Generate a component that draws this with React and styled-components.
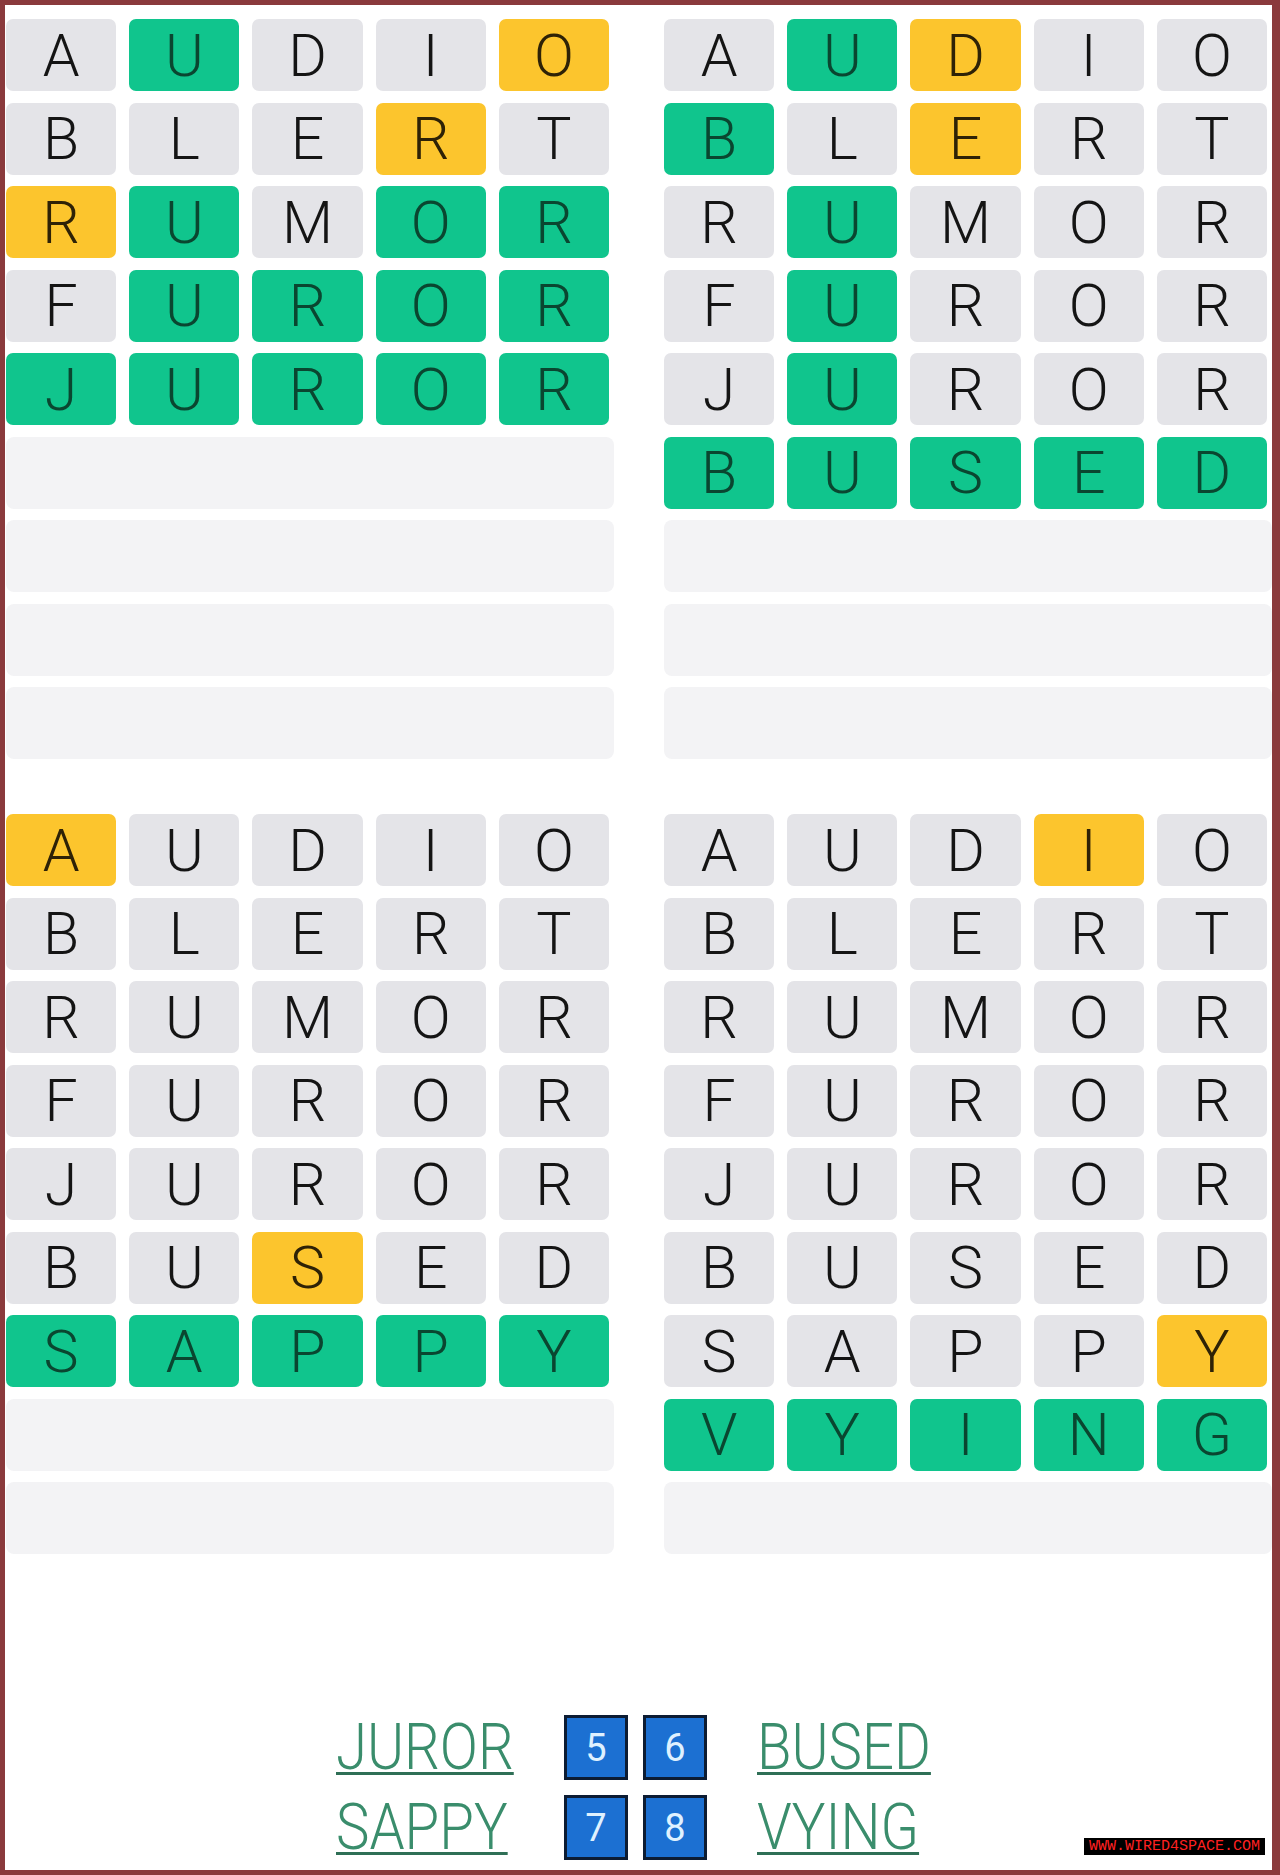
import styled, { createGlobalStyle } from 'styled-components';

const GUESSES = ['AUDIO', 'BLERT', 'RUMOR', 'FUROR', 'JUROR', 'BUSED', 'SAPPY', 'VYING'];

// x = absent, y = present, g = correct
const BOARDS = [
  ['xgxxy', 'xxxyx', 'ygxgg', 'xgggg', 'ggggg'],
  ['xgyxx', 'gxyxx', 'xgxxx', 'xgxxx', 'xgxxx', 'ggggg'],
  ['yxxxx', 'xxxxx', 'xxxxx', 'xxxxx', 'xxxxx', 'xxyxx', 'ggggg'],
  ['xxxyx', 'xxxxx', 'xxxxx', 'xxxxx', 'xxxxx', 'xxxxx', 'xxxxy', 'ggggg'],
];

const ROWS = 9;

const ANSWERS = [
  ['JUROR', 5, 6, 'BUSED'],
  ['SAPPY', 7, 8, 'VYING'],
];

const tileBg = { x: '#e4e4e8', y: '#fcc52d', g: '#10c58d' };
const tileInk = { x: '#141414', y: '#2e2206', g: '#0a4630' };

const GlobalStyle = createGlobalStyle`
  html, body {
    margin: 0;
    padding: 0;
    background: #fff;
  }
  body {
    font-family: Roboto, "Liberation Sans", sans-serif;
  }
`;

const Frame = styled.div`
  position: relative;
  width: 1280px;
  height: 1875px;
  box-sizing: border-box;
  border: 5px solid #8a3a3c;
  border-right-width: 8px;
  padding: 14px 5px 0 1px;
  background: #fff;
  display: flex;
  flex-direction: column;
`;

const BoardGrid = styled.div`
  display: grid;
  grid-template-columns: 1fr 1fr;
  column-gap: 55px;
  row-gap: 55px;
`;

const Board = styled.div`
  display: flex;
  flex-direction: column;
  gap: 11.5px;
`;

const GuessRow = styled.div`
  display: grid;
  grid-template-columns: repeat(5, 1fr);
  column-gap: 13px;
  height: 72px;
`;

const EmptyRow = styled.div`
  height: 72px;
  margin-right: -5px;
  border-radius: 8px;
  background: #f3f3f5;
`;

const Tile = styled.div`
  display: flex;
  align-items: center;
  justify-content: center;
  border-radius: 7px;
  background: ${(p) => tileBg[p.$state]};
  color: ${(p) => tileInk[p.$state]};
  font-size: 59px;
  font-weight: 300;
  line-height: 1;
`;

const Answers = styled.div`
  margin-top: 161px;
  display: flex;
  flex-direction: column;
  align-items: center;
  gap: 15px;
`;

const AnswerRow = styled.div`
  display: flex;
  align-items: center;
`;

const WordCell = styled.div`
  width: 180px;
  margin: ${(p) => (p.$side === 'left' ? '0 48px 0 0' : '0 0 0 50px')};
`;

const Word = styled.a`
  display: inline-block;
  transform: scaleX(0.88);
  transform-origin: left center;
  font-size: 64px;
  font-weight: 300;
  line-height: 1;
  color: #3a8d6c;
  text-decoration: underline;
  text-decoration-color: #2f6f56;
  text-decoration-thickness: 3px;
  text-underline-offset: 3px;
`;

const NumBox = styled.div`
  width: 64px;
  height: 65px;
  box-sizing: border-box;
  display: flex;
  align-items: center;
  justify-content: center;
  border: 3px solid #0c1c33;
  background: #1c70d2;
  color: #dff1ff;
  font-size: 38px;
  font-weight: 400;
  & + & {
    margin-left: 15px;
  }
`;

const Watermark = styled.div`
  position: absolute;
  right: 7px;
  bottom: 15px;
  padding: 0 5px;
  background: #000;
  color: #ff2020;
  font-family: "Liberation Mono", "DejaVu Sans Mono", monospace;
  font-size: 15px;
  line-height: 17px;
`;

const App = () => {
  return (
    <>
      <GlobalStyle />
      <Frame>
        <BoardGrid>
          {BOARDS.map((board, b) => (
            <Board key={b}>
              {Array.from({ length: ROWS }).map((_, r) =>
                board[r] ? (
                  <GuessRow key={r}>
                    {GUESSES[r].split('').map((ch, i) => (
                      <Tile key={i} $state={board[r][i]}>
                        {ch}
                      </Tile>
                    ))}
                  </GuessRow>
                ) : (
                  <EmptyRow key={r} />
                )
              )}
            </Board>
          ))}
        </BoardGrid>

        <Answers>
          {ANSWERS.map(([left, a, b, right]) => (
            <AnswerRow key={left}>
              <WordCell $side="left">
                <Word href="#">{left}</Word>
              </WordCell>
              <NumBox>{a}</NumBox>
              <NumBox>{b}</NumBox>
              <WordCell $side="right">
                <Word href="#">{right}</Word>
              </WordCell>
            </AnswerRow>
          ))}
        </Answers>

        <Watermark>WWW.WIRED4SPACE.COM</Watermark>
      </Frame>
    </>
  );
};

export default App;
